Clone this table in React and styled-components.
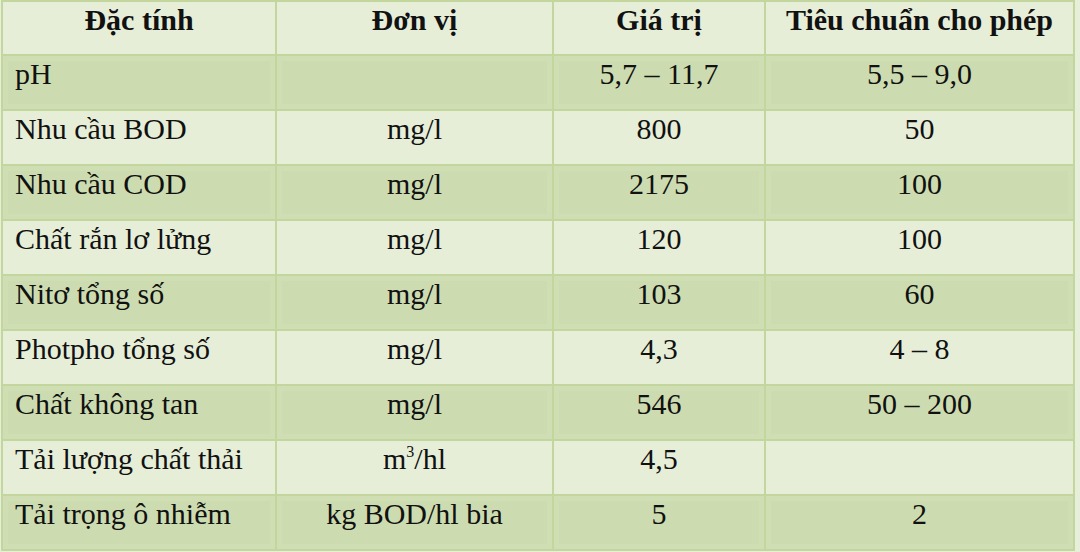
import React from 'react';
import styled, { createGlobalStyle } from 'styled-components';

const GlobalStyle = createGlobalStyle`
  html, body {
    margin: 0;
    padding: 0;
    background: #e7efda;
  }
  body {
    font-family: "Liberation Serif", serif;
    color: #111;
  }
`;

const Page = styled.div`
  width: 1080px;
  height: 552px;
  padding-left: 1px;
  box-sizing: border-box;
  overflow: hidden;
`;

const Grid = styled.div`
  display: grid;
  grid-template-columns: 272px 275px 210px 307px;
  grid-template-rows: 52px repeat(9, 53px);
  gap: 2px;
  padding: 2px;
  width: max-content;
  background: #c3d69d;
`;

const Cell = styled.div`
  padding: 2px 12px 0;
  background: ${p => (p.$dark ? '#cddcb0' : '#e6eed8')};
  box-shadow: ${p => (p.$dark ? 'inset 0 0 0 5px #cfdeb3' : 'none')};
  font-family: "Liberation Serif", "Times New Roman", serif;
  font-size: 30px;
  line-height: 32px;
  font-weight: ${p => (p.$bold ? 700 : 400)};
  text-align: ${p => (p.$left ? 'left' : 'center')};
  white-space: nowrap;

  sup {
    font-size: 16px;
    line-height: 0;
    vertical-align: 12px;
  }
`;

const rows = [
  ['pH', '', '5,7 – 11,7', '5,5 – 9,0'],
  ['Nhu cầu BOD', 'mg/l', '800', '50'],
  ['Nhu cầu COD', 'mg/l', '2175', '100'],
  ['Chất rắn lơ lửng', 'mg/l', '120', '100'],
  ['Nitơ tổng số', 'mg/l', '103', '60'],
  ['Photpho tổng số', 'mg/l', '4,3', '4 – 8'],
  ['Chất không tan', 'mg/l', '546', '50 – 200'],
  ['Tải lượng chất thải', <>m<sup>3</sup>/hl</>, '4,5', ''],
  ['Tải trọng ô nhiễm', 'kg BOD/hl bia', '5', '2'],
];

const heads = ['Đặc tính', 'Đơn vị', 'Giá trị', 'Tiêu chuẩn cho phép'];

export default function App() {
  return (
    <>
      <GlobalStyle />
      <Page>
        <Grid>
          {heads.map(h => (
            <Cell key={h} $bold>{h}</Cell>
          ))}
          {rows.map((r, i) =>
            r.map((c, j) => (
              <Cell key={`${i}-${j}`} $left={j === 0} $dark={i % 2 === 0}>{c}</Cell>
            ))
          )}
        </Grid>
      </Page>
    </>
  );
}
